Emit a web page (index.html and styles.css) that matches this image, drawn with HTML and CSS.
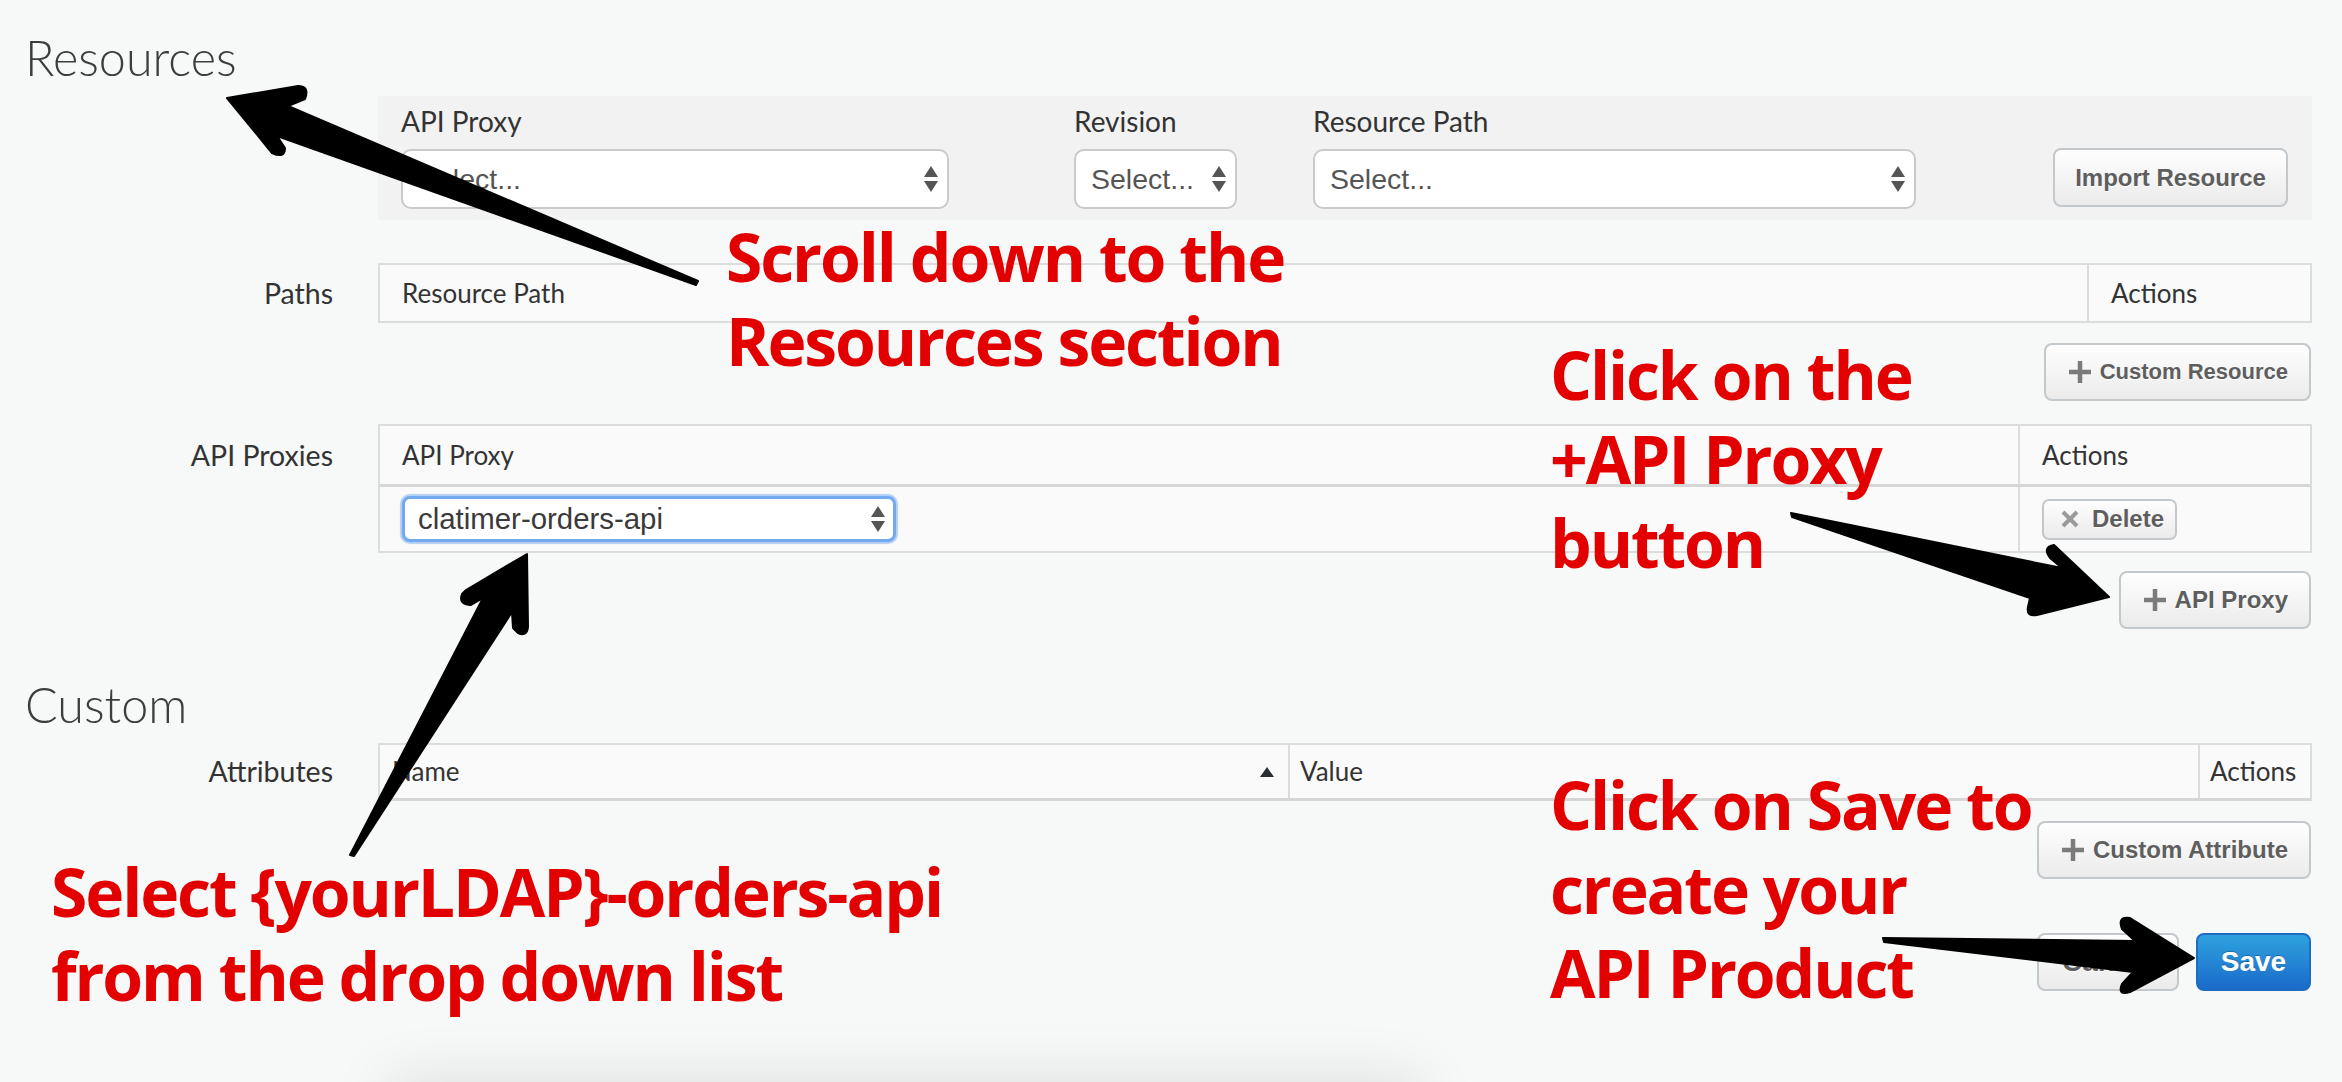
FILE: index.html
```html
<!DOCTYPE html>
<html>
<head>
<meta charset="utf-8">
<title>API Product - Resources</title>
<link rel="stylesheet" href="styles.css">
</head>
<body>
<div class="page">
  <h2 class="section-title title-resources">Resources</h2>

  <div class="form-row">
    <div class="row-label"></div>
    <div class="filter-bar">
      <div class="field field-proxy">
        <div class="field-label">API Proxy</div>
        <div class="select"><span class="select-text">Select...</span>
          <svg class="select-arrows" width="14" height="26" viewBox="0 0 14 26"><polygon points="0,11 7,0 14,11"/><polygon points="0,15 14,15 7,26"/></svg>
        </div>
      </div>
      <div class="field field-revision">
        <div class="field-label">Revision</div>
        <div class="select"><span class="select-text">Select...</span>
          <svg class="select-arrows" width="14" height="26" viewBox="0 0 14 26"><polygon points="0,11 7,0 14,11"/><polygon points="0,15 14,15 7,26"/></svg>
        </div>
      </div>
      <div class="field field-path">
        <div class="field-label">Resource Path</div>
        <div class="select"><span class="select-text">Select...</span>
          <svg class="select-arrows" width="14" height="26" viewBox="0 0 14 26"><polygon points="0,11 7,0 14,11"/><polygon points="0,15 14,15 7,26"/></svg>
        </div>
      </div>
      <button class="btn btn-import">Import Resource</button>
    </div>
  </div>

  <div class="form-row row-paths">
    <div class="row-label label-paths">Paths</div>
    <div class="table">
      <div class="trow cols-paths thead-paths">
        <div class="th">Resource Path</div>
        <div class="th th-divided">Actions</div>
      </div>
    </div>
  </div>

  <div class="btn-row row-custom-resource">
    <button class="btn btn-add btn-small-text">
      <svg class="icon-plus" width="22" height="24" viewBox="0 0 22 24"><path d="M11 1v22M0 12h22"/></svg>
      <span>Custom Resource</span>
    </button>
  </div>

  <div class="form-row row-proxies">
    <div class="row-label label-proxies">API Proxies</div>
    <div class="table">
      <div class="trow cols-proxies thead-proxies">
        <div class="th">API Proxy</div>
        <div class="th th-divided">Actions</div>
      </div>
      <div class="trow cols-proxies tbody-proxies">
        <div class="td">
          <div class="select select-focus"><span class="select-text select-value">clatimer-orders-api</span>
            <svg class="select-arrows" width="14" height="26" viewBox="0 0 14 26"><polygon points="0,11 7,0 14,11"/><polygon points="0,15 14,15 7,26"/></svg>
          </div>
        </div>
        <div class="td td-divided">
          <button class="btn btn-delete">
            <svg class="icon-x" width="20" height="18" viewBox="0 0 20 18"><path d="M3 2l14 14M17 2L3 16"/></svg>
            <span>Delete</span>
          </button>
        </div>
      </div>
    </div>
  </div>

  <div class="btn-row row-api-proxy">
    <button class="btn btn-add">
      <svg class="icon-plus" width="22" height="24" viewBox="0 0 22 24"><path d="M11 1v22M0 12h22"/></svg>
      <span>API Proxy</span>
    </button>
  </div>

  <h2 class="section-title title-custom">Custom</h2>

  <div class="form-row row-attributes">
    <div class="row-label label-attributes">Attributes</div>
    <div class="table table-attributes">
      <div class="trow cols-attributes thead-attributes">
        <div class="th th-name"><span>Name</span><svg class="sort-up" width="14" height="10" viewBox="0 0 14 10"><polygon points="0,10 7,0 14,10"/></svg></div>
        <div class="th th-divided">Value</div>
        <div class="th th-divided">Actions</div>
      </div>
    </div>
  </div>

  <div class="btn-row row-custom-attribute">
    <button class="btn btn-add">
      <svg class="icon-plus" width="22" height="24" viewBox="0 0 22 24"><path d="M11 1v22M0 12h22"/></svg>
      <span>Custom Attribute</span>
    </button>
  </div>

  <div class="btn-row row-submit">
    <button class="btn btn-cancel">Cancel</button>
    <button class="btn btn-save">Save</button>
  </div>

  <div class="page-footer"></div>
</div>

<svg class="arrows" width="2342" height="1082" viewBox="0 0 2342 1082">
  <path d="M227,98 L298,86 Q310,86 305,99 L288,106 L698,281 L696,285 L277,136 L285,148 Q285,159 272,153 Z"/>
  <path d="M527,554 L528,627 Q527,637 518,633 L513,628 L512,612 L354,856 L350,855 L483,598 L471,605 Q458,604 462,594 L466,590 Z"/>
  <path d="M2109,597 L2037,615 Q2026,617 2028,607 L2030,598 L1792,517 L1791,513 L2062,568 L2050,558 Q2042,547 2054,545 Z"/>
  <path d="M2194,958 L2130,992 Q2117,996 2122,984 L2133,972 L1884,942 L1883,938 L2135,941 L2122,929 Q2117,916 2130,918 Z"/>
</svg>

<div class="note note-scroll">Scroll down to the<br>Resources section</div>
<div class="note note-proxy">Click on the<br>+API Proxy<br>button</div>
<div class="note note-save">Click on Save to<br>create your<br>API Product</div>
<div class="note note-select">Select {yourLDAP}-orders-api<br>from the drop down list</div>
</body>
</html>
```

FILE: styles.css
```css
html, body {
  margin: 0;
  padding: 0;
}

body {
  width: 2342px;
  height: 1082px;
  overflow: hidden;
  position: relative;
  background: #f7f8f8;
  font-family: Lato, "Liberation Sans", Arial, sans-serif;
  color: #333;
}

.page {
  padding: 29px 30px 0 25px;
}

.section-title {
  margin: 0;
  font-family: Lato, "Open Sans", sans-serif;
  font-weight: 300;
  font-size: 48.5px;
  line-height: 56px;
  color: #3d3d3d;
}

.title-resources {
  margin-bottom: 11px;
}

.title-custom {
  margin-top: 47px;
}

.form-row {
  display: grid;
  grid-template-columns: 308px 1934px;
  column-gap: 45px;
}

.row-label {
  text-align: right;
  font-size: 28.5px;
  color: #333;
  padding-top: 2px;
}

.label-paths { line-height: 56px; }
.label-proxies { line-height: 58px; }
.label-attributes { line-height: 53px; }

/* Filter bar */
.filter-bar {
  box-sizing: border-box;
  height: 124px;
  background: #f2f2f2;
  padding: 8px 0 0 23px;
  display: flex;
  align-items: flex-start;
}

.field {
  display: flex;
  flex-direction: column;
}

.field-label {
  font-size: 28px;
  line-height: 34px;
  margin-bottom: 11px;
  color: #333;
}

.field-proxy { width: 548px; margin-right: 125px; }
.field-revision { width: 163px; margin-right: 76px; }
.field-path { width: 603px; margin-right: 137px; }

.select {
  box-sizing: border-box;
  height: 60px;
  border: 2px solid #cacaca;
  border-radius: 10px;
  background: #fff;
  display: flex;
  align-items: center;
  justify-content: space-between;
  padding: 0 9px 0 15px;
  font-family: "Liberation Sans", Arial, sans-serif;
  font-size: 28.5px;
  color: #555;
}

.select-arrows {
  fill: #555;
  flex: none;
}

.select-focus {
  height: 46px;
  width: 494px;
  border: 3px solid #72a9ef;
  border-radius: 8px;
  box-shadow: 0 0 1px 2px rgba(120, 172, 240, 0.55);
  padding: 0 8px 0 13px;
}

.select-value {
  color: #3a3a3a;
  font-size: 29.4px;
}

/* Buttons */
.btn {
  box-sizing: border-box;
  height: 58px;
  margin: 0;
  border: 2px solid #c2c8cc;
  border-radius: 8px;
  background: linear-gradient(#fefefe, #ebebeb);
  font-family: "Liberation Sans", Arial, sans-serif;
  font-weight: 700;
  font-size: 24px;
  color: #5e5e5e;
  text-shadow: 0 1px 0 #fff;
  display: inline-flex;
  align-items: center;
  justify-content: center;
  padding: 0;
  white-space: nowrap;
}

.btn-import {
  width: 235px;
  height: 59px;
  margin-top: 44px;
}

.btn-add {
  padding: 0 21px 0 23px;
  gap: 9px;
}

.btn-small-text {
  font-size: 22px;
}

.icon-plus {
  stroke: #7b7b7b;
  stroke-width: 4.5;
  fill: none;
  flex: none;
}

.btn-delete {
  height: 41px;
  padding: 0 11px 0 16px;
  gap: 12px;
  border-radius: 7px;
}

.icon-x {
  stroke: #9a9a9a;
  stroke-width: 4;
  fill: none;
  flex: none;
}

.btn-cancel {
  width: 142px;
  font-size: 28px;
}

.btn-save {
  width: 115px;
  font-size: 28px;
  color: #fff;
  border-color: #1d6cbf;
  background: linear-gradient(#2ea2de, #1a6bca);
  text-shadow: 0 -1px 0 rgba(0, 0, 0, 0.25);
  margin-left: 17px;
}

.btn-row {
  display: flex;
  justify-content: flex-end;
  padding-right: 1px;
}

.row-paths { margin-top: 43px; }
.row-custom-resource { margin-top: 20px; }
.row-proxies { margin-top: 23px; }
.row-api-proxy { margin-top: 18px; }
.row-attributes { margin-top: 11px; }
.row-custom-attribute { margin-top: 20px; }
.row-submit { margin-top: 54px; }

/* Tables */
.table {
  border: 2px solid #dcdcdc;
  background: #fafafa;
}

.trow {
  display: grid;
}

.th, .td {
  box-sizing: border-box;
  font-size: 26px;
  color: #333;
  padding: 0 22px;
  white-space: nowrap;
}

.th-divided, .td-divided {
  border-left: 2px solid #dcdcdc;
}

.cols-paths { grid-template-columns: 1fr 223px; }
.cols-proxies { grid-template-columns: 1fr 292px; }
.cols-attributes { grid-template-columns: 908px 1fr 112px; }

.thead-paths .th { line-height: 56px; }

.thead-proxies {
  border-bottom: 3px solid #d6d6d6;
}
.thead-proxies .th { line-height: 58px; }

.tbody-proxies .td {
  height: 64px;
  display: flex;
  align-items: center;
}

.table-attributes {
  border-bottom: none;
}

.thead-attributes {
  border-bottom: 3px solid #d6d6d6;
}
.thead-attributes .th {
  line-height: 53px;
  padding: 0 10px;
}
.thead-attributes .th-name {
  padding: 0 14px 0 12px;
  display: flex;
  align-items: center;
  justify-content: space-between;
}

.sort-up {
  fill: #2b2f33;
}

/* faint shadow of an element below the fold */
.page-footer {
  margin-top: 99px;
  margin-left: 375px;
  width: 1010px;
  height: 60px;
  background: #f7f8f8;
  box-shadow: 0 0 60px 12px rgba(0, 0, 0, 0.10);
}

/* Annotation overlay */
.arrows {
  position: absolute;
  left: 0;
  top: 0;
  pointer-events: none;
}

.arrows path {
  fill: #000;
  stroke: #000;
  stroke-width: 2;
  stroke-linejoin: round;
}

.note {
  position: absolute;
  font-family: "Open Sans", "Noto Sans", sans-serif;
  font-weight: 700;
  font-size: 66px;
  line-height: 84px;
  letter-spacing: -2.1px;
  color: #e30000;
  white-space: nowrap;
}

.note-scroll { left: 726px; top: 214px; }
.note-proxy { left: 1550px; top: 332px; }
.note-save { left: 1550px; top: 762px; }
.note-select { left: 51px; top: 849px; }
```
